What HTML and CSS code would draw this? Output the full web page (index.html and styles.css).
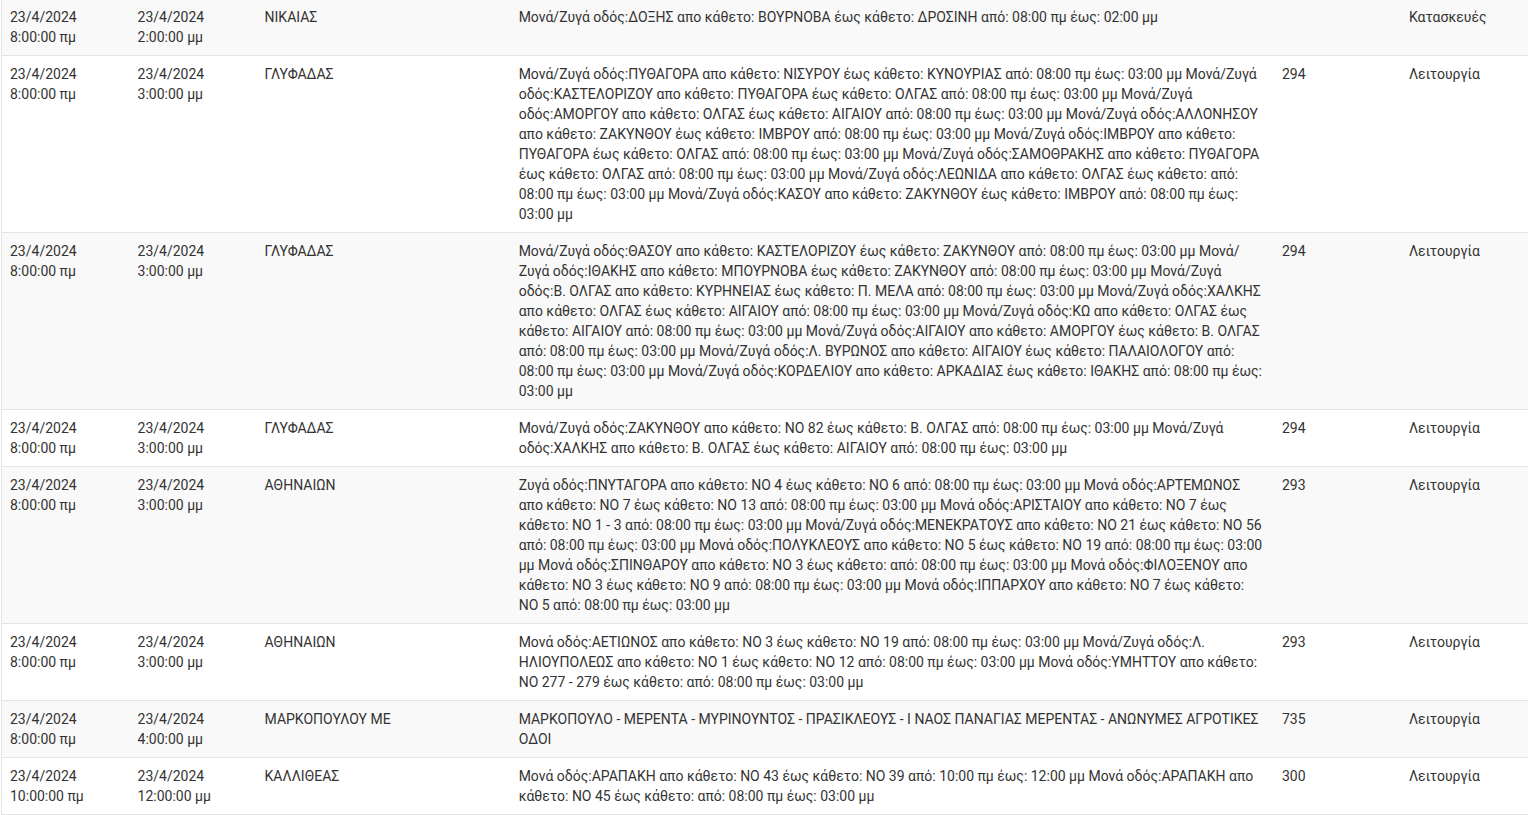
FILE: index.html
```html
<!DOCTYPE html>
<html lang="el">
  <head>
    <meta charset="UTF-8" />
    <meta name="viewport" content="width=device-width, initial-scale=1.0" />
    <title>Διακοπές ρεύματος</title>
    <link rel="stylesheet" href="styles.css">
  </head>
  <body>
    <div class="container">
      <table class="outages">
        <colgroup>
          <col class="col-start" />
          <col class="col-end" />
          <col class="col-area" />
          <col class="col-desc" />
          <col class="col-num" />
          <col class="col-type" />
        </colgroup>
        <tbody>
          <tr>
            <td>23/4/2024 8:00:00 πμ</td>
            <td>23/4/2024 2:00:00 μμ</td>
            <td>ΝΙΚΑΙΑΣ</td>
            <td>Μονά/Ζυγά οδός:ΔΟΞΗΣ απο κάθετο: ΒΟΥΡΝΟΒΑ έως κάθετο: ΔΡΟΣΙΝΗ από: 08:00 πμ έως: 02:00 μμ</td>
            <td></td>
            <td>Κατασκευές</td>
          </tr>
          <tr>
            <td>23/4/2024 8:00:00 πμ</td>
            <td>23/4/2024 3:00:00 μμ</td>
            <td>ΓΛΥΦΑΔΑΣ</td>
            <td>Μονά/Ζυγά οδός:ΠΥΘΑΓΟΡΑ απο κάθετο: ΝΙΣΥΡΟΥ έως κάθετο: ΚΥΝΟΥΡΙΑΣ από: 08:00 πμ έως: 03:00 μμ Μονά/Ζυγά οδός:ΚΑΣΤΕΛΟΡΙΖΟΥ απο κάθετο: ΠΥΘΑΓΟΡΑ έως κάθετο: ΟΛΓΑΣ από: 08:00 πμ έως: 03:00 μμ Μονά/Ζυγά οδός:ΑΜΟΡΓΟΥ απο κάθετο: ΟΛΓΑΣ έως κάθετο: ΑΙΓΑΙΟΥ από: 08:00 πμ έως: 03:00 μμ Μονά/Ζυγά οδός:ΑΛΛΟΝΗΣΟΥ απο κάθετο: ΖΑΚΥΝΘΟΥ έως κάθετο: ΙΜΒΡΟΥ από: 08:00 πμ έως: 03:00 μμ Μονά/Ζυγά οδός:ΙΜΒΡΟΥ απο κάθετο: ΠΥΘΑΓΟΡΑ έως κάθετο: ΟΛΓΑΣ από: 08:00 πμ έως: 03:00 μμ Μονά/Ζυγά οδός:ΣΑΜΟΘΡΑΚΗΣ απο κάθετο: ΠΥΘΑΓΟΡΑ έως κάθετο: ΟΛΓΑΣ από: 08:00 πμ έως: 03:00 μμ Μονά/Ζυγά οδός:ΛΕΩΝΙΔΑ απο κάθετο: ΟΛΓΑΣ έως κάθετο: από: 08:00 πμ έως: 03:00 μμ Μονά/Ζυγά οδός:ΚΑΣΟΥ απο κάθετο: ΖΑΚΥΝΘΟΥ έως κάθετο: ΙΜΒΡΟΥ από: 08:00 πμ έως: 03:00 μμ</td>
            <td>294</td>
            <td>Λειτουργία</td>
          </tr>
          <tr>
            <td>23/4/2024 8:00:00 πμ</td>
            <td>23/4/2024 3:00:00 μμ</td>
            <td>ΓΛΥΦΑΔΑΣ</td>
            <td>Μονά/Ζυγά οδός:ΘΑΣΟΥ απο κάθετο: ΚΑΣΤΕΛΟΡΙΖΟΥ έως κάθετο: ΖΑΚΥΝΘΟΥ από: 08:00 πμ έως: 03:00 μμ Μονά/Ζυγά οδός:ΙΘΑΚΗΣ απο κάθετο: ΜΠΟΥΡΝΟΒΑ έως κάθετο: ΖΑΚΥΝΘΟΥ από: 08:00 πμ έως: 03:00 μμ Μονά/Ζυγά οδός:Β. ΟΛΓΑΣ απο κάθετο: ΚΥΡΗΝΕΙΑΣ έως κάθετο: Π. ΜΕΛΑ από: 08:00 πμ έως: 03:00 μμ Μονά/Ζυγά οδός:ΧΑΛΚΗΣ απο κάθετο: ΟΛΓΑΣ έως κάθετο: ΑΙΓΑΙΟΥ από: 08:00 πμ έως: 03:00 μμ Μονά/Ζυγά οδός:ΚΩ απο κάθετο: ΟΛΓΑΣ έως κάθετο: ΑΙΓΑΙΟΥ από: 08:00 πμ έως: 03:00 μμ Μονά/Ζυγά οδός:ΑΙΓΑΙΟΥ απο κάθετο: ΑΜΟΡΓΟΥ έως κάθετο: Β. ΟΛΓΑΣ από: 08:00 πμ έως: 03:00 μμ Μονά/Ζυγά οδός:Λ. ΒΥΡΩΝΟΣ απο κάθετο: ΑΙΓΑΙΟΥ έως κάθετο: ΠΑΛΑΙΟΛΟΓΟΥ από: 08:00 πμ έως: 03:00 μμ Μονά/Ζυγά οδός:ΚΟΡΔΕΛΙΟΥ απο κάθετο: ΑΡΚΑΔΙΑΣ έως κάθετο: ΙΘΑΚΗΣ από: 08:00 πμ έως: 03:00 μμ</td>
            <td>294</td>
            <td>Λειτουργία</td>
          </tr>
          <tr>
            <td>23/4/2024 8:00:00 πμ</td>
            <td>23/4/2024 3:00:00 μμ</td>
            <td>ΓΛΥΦΑΔΑΣ</td>
            <td>Μονά/Ζυγά οδός:ΖΑΚΥΝΘΟΥ απο κάθετο: ΝΟ 82 έως κάθετο: Β. ΟΛΓΑΣ από: 08:00 πμ έως: 03:00 μμ Μονά/Ζυγά οδός:ΧΑΛΚΗΣ απο κάθετο: Β. ΟΛΓΑΣ έως κάθετο: ΑΙΓΑΙΟΥ από: 08:00 πμ έως: 03:00 μμ</td>
            <td>294</td>
            <td>Λειτουργία</td>
          </tr>
          <tr>
            <td>23/4/2024 8:00:00 πμ</td>
            <td>23/4/2024 3:00:00 μμ</td>
            <td>ΑΘΗΝΑΙΩΝ</td>
            <td>Ζυγά οδός:ΠΝΥΤΑΓΟΡΑ απο κάθετο: ΝΟ 4 έως κάθετο: ΝΟ 6 από: 08:00 πμ έως: 03:00 μμ Μονά οδός:ΑΡΤΕΜΩΝΟΣ απο κάθετο: ΝΟ 7 έως κάθετο: ΝΟ 13 από: 08:00 πμ έως: 03:00 μμ Μονά οδός:ΑΡΙΣΤΑΙΟΥ απο κάθετο: ΝΟ 7 έως κάθετο: ΝΟ 1 - 3 από: 08:00 πμ έως: 03:00 μμ Μονά/Ζυγά οδός:ΜΕΝΕΚΡΑΤΟΥΣ απο κάθετο: ΝΟ 21 έως κάθετο: ΝΟ 56 από: 08:00 πμ έως: 03:00 μμ Μονά οδός:ΠΟΛΥΚΛΕΟΥΣ απο κάθετο: ΝΟ 5 έως κάθετο: ΝΟ 19 από: 08:00 πμ έως: 03:00 μμ Μονά οδός:ΣΠΙΝΘΑΡΟΥ απο κάθετο: ΝΟ 3 έως κάθετο: από: 08:00 πμ έως: 03:00 μμ Μονά οδός:ΦΙΛΟΞΕΝΟΥ απο κάθετο: ΝΟ 3 έως κάθετο: ΝΟ 9 από: 08:00 πμ έως: 03:00 μμ Μονά οδός:ΙΠΠΑΡΧΟΥ απο κάθετο: ΝΟ 7 έως κάθετο: ΝΟ 5 από: 08:00 πμ έως: 03:00 μμ</td>
            <td>293</td>
            <td>Λειτουργία</td>
          </tr>
          <tr>
            <td>23/4/2024 8:00:00 πμ</td>
            <td>23/4/2024 3:00:00 μμ</td>
            <td>ΑΘΗΝΑΙΩΝ</td>
            <td>Μονά οδός:ΑΕΤΙΩΝΟΣ απο κάθετο: ΝΟ 3 έως κάθετο: ΝΟ 19 από: 08:00 πμ έως: 03:00 μμ Μονά/Ζυγά οδός:Λ. ΗΛΙΟΥΠΟΛΕΩΣ απο κάθετο: ΝΟ 1 έως κάθετο: ΝΟ 12 από: 08:00 πμ έως: 03:00 μμ Μονά οδός:ΥΜΗΤΤΟΥ απο κάθετο: ΝΟ 277 - 279 έως κάθετο: από: 08:00 πμ έως: 03:00 μμ</td>
            <td>293</td>
            <td>Λειτουργία</td>
          </tr>
          <tr>
            <td>23/4/2024 8:00:00 πμ</td>
            <td>23/4/2024 4:00:00 μμ</td>
            <td>ΜΑΡΚΟΠΟΥΛΟΥ ΜΕ</td>
            <td>ΜΑΡΚΟΠΟΥΛΟ - ΜΕΡΕΝΤΑ - ΜΥΡΙΝΟΥΝΤΟΣ - ΠΡΑΣΙΚΛΕΟΥΣ - Ι ΝΑΟΣ ΠΑΝΑΓΙΑΣ ΜΕΡΕΝΤΑΣ - ΑΝΩΝΥΜΕΣ ΑΓΡΟΤΙΚΕΣ ΟΔΟΙ</td>
            <td>735</td>
            <td>Λειτουργία</td>
          </tr>
          <tr>
            <td>23/4/2024 10:00:00 πμ</td>
            <td>23/4/2024 12:00:00 μμ</td>
            <td>ΚΑΛΛΙΘΕΑΣ</td>
            <td>Μονά οδός:ΑΡΑΠΑΚΗ απο κάθετο: ΝΟ 43 έως κάθετο: ΝΟ 39 από: 10:00 πμ έως: 12:00 μμ Μονά οδός:ΑΡΑΠΑΚΗ απο κάθετο: ΝΟ 45 έως κάθετο: από: 08:00 πμ έως: 03:00 μμ</td>
            <td>300</td>
            <td>Λειτουργία</td>
          </tr>
        </tbody>
      </table>
    </div>
  </body>
</html>
```

FILE: styles.css
```css
body {
  font-family: Roboto, "Noto Sans", Arial, sans-serif;
  font-size: 14px;
  line-height: 20px;
  color: #333;
  background: #fff;
  margin: 0;
  padding: 0 0 0 1px;
}

.container {
  margin-top: -2px;
}

.outages {
  width: 1527px;
  border-collapse: collapse;
  table-layout: fixed;
  border-left: 1px solid #e3e3e3;
}

.col-start {
  width: 128px;
}

.col-end {
  width: 127px;
}

.col-area {
  width: 254px;
}

.col-desc {
  width: 763px;
}

.col-num {
  width: 127px;
}

.col-type {
  width: 127px;
}

.outages td {
  padding: 8px;
  vertical-align: top;
  border-top: 1px solid #e3e3e3;
  border-bottom: 1px solid #e3e3e3;
}

.outages tr:nth-child(odd) {
  background: #f9f9f9;
}
```
